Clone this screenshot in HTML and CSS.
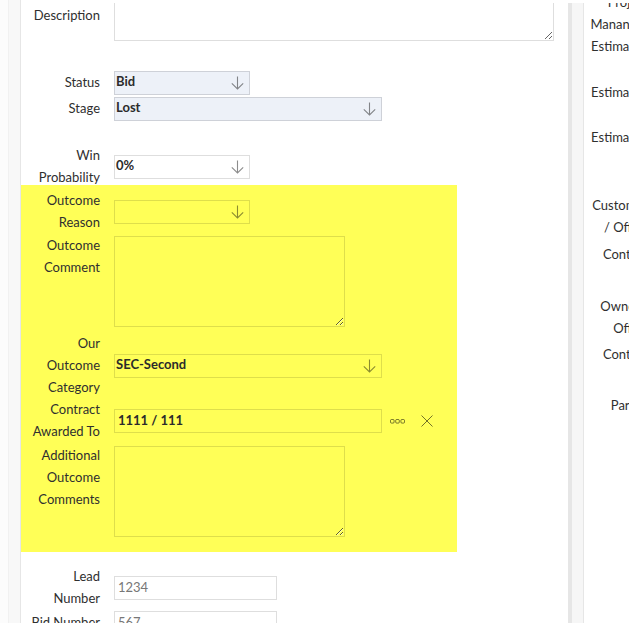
FILE: index.html
```html
<!DOCTYPE html>
<html lang="en">
<head>
<meta charset="utf-8">
<title>Opportunity</title>
<link rel="stylesheet" href="styles.css">
</head>
<body>
<div class="page">
  <div class="gutter"><div class="gutter-inner"></div></div>

  <main class="form">
    <div class="row row-desc">
      <div class="lbl lbl-desc">Description</div>
      <textarea class="ta ta-desc"></textarea>
    </div>

    <div class="row sp-status">
      <div class="lbl">Status</div>
      <div class="sel sel-sm ro"><span class="val">Bid</span><svg class="arr" viewBox="0 0 13 14"><path d="M6.5 0.5V13M0.8 7.3L6.5 13L12.2 7.3"/></svg></div>
    </div>
    <div class="row">
      <div class="lbl">Stage</div>
      <div class="sel sel-lg ro"><span class="val">Lost</span><svg class="arr" viewBox="0 0 13 14"><path d="M6.5 0.5V13M0.8 7.3L6.5 13L12.2 7.3"/></svg></div>
    </div>

    <div class="row sp-win">
      <div class="lbl">Win Probability</div>
      <div class="sel sel-sm"><span class="val">0%</span><svg class="arr" viewBox="0 0 13 14"><path d="M6.5 0.5V13M0.8 7.3L6.5 13L12.2 7.3"/></svg></div>
    </div>

    <section class="highlight">
      <div class="row">
        <div class="lbl">Outcome Reason</div>
        <div class="sel sel-sm"><span class="val"></span><svg class="arr" viewBox="0 0 13 14"><path d="M6.5 0.5V13M0.8 7.3L6.5 13L12.2 7.3"/></svg></div>
      </div>
      <div class="row row-ta">
        <div class="lbl">Outcome Comment</div>
        <textarea class="ta ta-md"></textarea>
      </div>
      <div class="row sp-cat">
        <div class="lbl">Our Outcome Category</div>
        <div class="sel sel-lg"><span class="val">SEC-Second</span><svg class="arr" viewBox="0 0 13 14"><path d="M6.5 0.5V13M0.8 7.3L6.5 13L12.2 7.3"/></svg></div>
      </div>
      <div class="row">
        <div class="lbl">Contract Awarded To</div>
        <div class="inp inp-lg strong">1111 / 111</div>
        <svg class="dots" viewBox="0 0 15 5"><rect x="0.5" y="0.5" width="3.6" height="3.6" rx="1"/><rect x="5.7" y="0.5" width="3.6" height="3.6" rx="1"/><rect x="10.9" y="0.5" width="3.6" height="3.6" rx="1"/></svg>
        <svg class="clear" viewBox="0 0 12 12"><path d="M0.5 0.5L11.5 11.5M11.5 0.5L0.5 11.5"/></svg>
      </div>
      <div class="row row-ta sp-add">
        <div class="lbl">Additional Outcome Comments</div>
        <textarea class="ta ta-md"></textarea>
      </div>
    </section>

    <div class="row sp-lead">
      <div class="lbl">Lead Number</div>
      <div class="inp inp-md muted">1234</div>
    </div>
    <div class="row">
      <div class="lbl">Bid Number</div>
      <div class="inp inp-md muted">567</div>
    </div>
  </main>

  <div class="scrollbar"></div>
  <div class="divider"></div>

  <aside class="side">
    <div class="slbl s1">Project Mananger</div>
    <div class="slbl">Estimated</div>
    <div class="slbl s3">Estimated</div>
    <div class="slbl s4">Estimated</div>
    <div class="slbl s5">Customer / Office</div>
    <div class="slbl s6">Contact</div>
    <div class="slbl s7">Owner's Office</div>
    <div class="slbl s8">Contact</div>
    <div class="slbl s9">Parent</div>
  </aside>

  <div class="topmask"></div>
</div>
</body>
</html>
```

FILE: styles.css
```css
html, body {
  margin: 0;
  height: 100%;
  overflow: hidden;
  background: #fff;
}

body {
  font-family: Lato, "Open Sans", sans-serif;
  font-size: 13px;
  color: #2f2f2f;
}

.page {
  position: relative;
  display: flex;
  width: 720px;
  height: 623px;
}

.gutter {
  flex: none;
  width: 20px;
  background: #f8f8f8;
  border-right: 1px solid #e6e6e6;
  display: flex;
}

.gutter-inner {
  width: 8px;
  background: #fcfcfc;
  border-right: 1px solid #f1f1f1;
}

.form {
  flex: none;
  width: 547px;
  display: flex;
  flex-direction: column;
}

.row {
  display: flex;
  align-items: center;
  column-gap: 14px;
}

.lbl {
  flex: none;
  width: 72px;
  margin-left: 7px;
  text-align: right;
  line-height: 22px;
}

.row-desc {
  align-items: flex-start;
}

.lbl-desc {
  margin-top: 4px;
}

.row-ta {
  align-items: flex-start;
  margin-top: 1px;
}

.sp-status { margin-top: 28px; }
.sp-win { margin-top: 23px; }
.sp-cat { margin-top: 5px; }
.sp-add { margin-top: 2px; }
.sp-lead { margin-top: 13px; }

.ta {
  display: block;
  box-sizing: border-box;
  margin: 2px 0 0;
  padding: 2px;
  border: 1px solid rgba(0, 0, 0, 0.13);
  border-radius: 0;
  background: transparent;
  font: inherit;
  outline: none;
}

.ta-desc {
  width: 440px;
  height: 39px;
}

.ta-md {
  width: 231px;
  height: 91px;
}

.sel, .inp {
  flex: none;
  box-sizing: border-box;
  height: 24px;
  margin-top: 2px;
  border: 1px solid rgba(0, 0, 0, 0.13);
  display: flex;
  align-items: flex-start;
  line-height: 18px;
}

.sel {
  justify-content: space-between;
  padding: 0 5px 0 1px;
  font-weight: 700;
  color: #2b2b2b;
}

.ro {
  background: #edf1f8;
}

.sel-sm { width: 136px; }
.sel-lg { width: 268px; }

.arr {
  align-self: center;
  width: 13px;
  height: 14px;
  fill: none;
  stroke: rgba(0, 0, 0, 0.45);
  stroke-width: 1.1;
}

.inp {
  padding: 1px 3px 0;
}

.inp-lg { width: 268px; }
.inp-md { width: 163px; }

.strong {
  font-weight: 700;
  color: #2b2b2b;
}

.muted {
  color: #777;
}

.dots {
  flex: none;
  width: 15px;
  height: 5px;
  margin-left: -6px;
  margin-top: 2px;
  fill: none;
  stroke: rgba(0, 0, 0, 0.5);
  stroke-width: 1;
}

.clear {
  flex: none;
  width: 12px;
  height: 12px;
  margin-left: 2px;
  margin-top: 1px;
  fill: none;
  stroke: rgba(0, 0, 0, 0.55);
  stroke-width: 1;
}

.highlight {
  position: relative;
  width: 436px;
  margin-top: -3px;
  padding: 4px 0 15px;
  box-sizing: border-box;
  background: #ffff57;
}

.scrollbar {
  flex: none;
  width: 4px;
  background: #e6e6e6;
}

.divider {
  flex: none;
  width: 11px;
  background: #f6f6f6;
  border-right: 1px solid #e6e6e6;
}

.side {
  flex: none;
  width: 120px;
  padding-left: 2px;
}

.slbl {
  width: 62px;
  text-align: right;
  line-height: 22px;
}

.s1 { margin-top: -9px; }
.s3 { margin-top: 24px; }
.s4 { margin-top: 23px; }
.s5 { margin-top: 46px; }
.s6 { margin-top: 5px; }
.s7 { margin-top: 30px; }
.s8 { margin-top: 4px; }
.s9 { margin-top: 29px; }

.topmask {
  position: absolute;
  top: 0;
  left: 21px;
  right: 0;
  height: 3px;
  background: #fff;
}
```
